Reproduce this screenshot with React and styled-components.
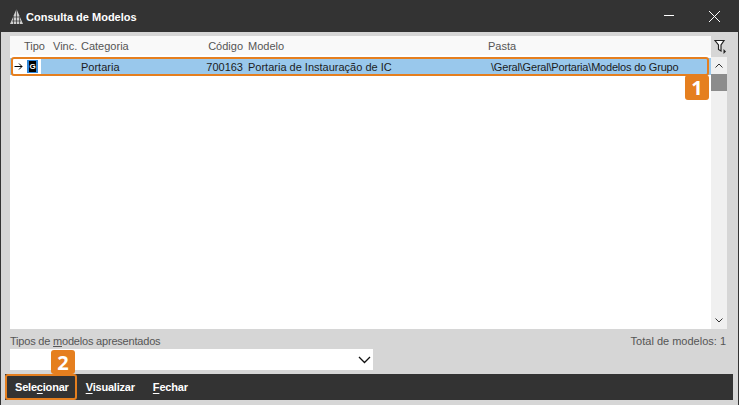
import React from 'react';
import styled, { createGlobalStyle } from 'styled-components';

const GlobalStyle = createGlobalStyle`
  html, body {
    margin: 0;
    padding: 0;
    background: #d6d6d6;
  }
`;

const Window = styled.div`
  width: 739px;
  height: 405px;
  box-sizing: border-box;
  display: flex;
  flex-direction: column;
  background: #d6d6d6;
  border-left: 1px solid #333;
  border-right: 1px solid #333;
  font-family: 'Liberation Sans', 'Noto Sans', sans-serif;
  font-size: 11px;
  color: #222;
  overflow: hidden;
`;

const TitleBar = styled.div`
  height: 32px;
  margin: 0 -1px;
  flex: none;
  display: flex;
  align-items: center;
  background: #333;
  color: #fff;
  padding-left: 9px;
`;

const Title = styled.span`
  margin-left: 2px;
  padding-top: 1px;
  font-weight: 700;
  font-size: 11px;
`;

const WindowButtons = styled.div`
  margin-left: auto;
  display: flex;
  align-items: center;
  gap: 33px;
  padding-right: 18px;
`;

const GridArea = styled.div`
  height: 293px;
  flex: none;
  margin: 4px 11px 0 9px;
  display: flex;
`;

const Grid = styled.div`
  position: relative;
  width: 701px;
  flex: none;
  background: #fff;
`;

const Side = styled.div`
  flex: 1;
  display: flex;
  flex-direction: column;
  align-items: stretch;
`;

const FilterSlot = styled.div`
  height: 21px;
  display: flex;
  align-items: center;
  justify-content: center;
  padding-left: 2px;
`;

const ScrollBar = styled.div`
  width: 16px;
  flex: 1;
  background: #f0f0f0;
  display: flex;
  flex-direction: column;
`;

const ScrollButton = styled.div`
  height: 17px;
  display: flex;
  align-items: center;
  justify-content: center;
  flex: none;
`;

const ScrollThumb = styled.div`
  height: 17px;
  flex: none;
  background: #8c8c8c;
`;

const ScrollTrack = styled.div`
  flex: 1;
`;

const Cols = styled.div`
  display: grid;
  grid-template-columns: 3px 11px 29px 28px 123px 39px 241px 1fr;
  height: ${p => p.$height}px;
  align-items: center;
  background: ${p => p.$bg};
`;

const Cell = styled.div`
  white-space: nowrap;
  text-align: ${p => (p.$right ? 'right' : 'left')};
  color: ${p => (p.$muted ? '#555' : '#1c1c1c')};
  padding-left: ${p => p.$pad || 0}px;
  letter-spacing: ${p => (p.$tight ? '-0.2px' : 'normal')};
`;

const Spacer = styled.div`
  height: 3px;
`;

const TipoBox = styled.div`
  width: 17px;
  height: 17px;
  background: #fff;
  display: flex;
  align-items: center;
  justify-content: center;
`;

const TipoIcon = styled.div`
  width: 11px;
  height: 13px;
  box-sizing: border-box;
  background: #000;
  border: 1px solid #2f86d8;
  border-width: 1px 2px;
  color: #fff;
  font-size: 8px;
  font-weight: 700;
  line-height: 11px;
  text-align: center;
`;

const ArrowBox = styled.div`
  height: 17px;
  background: #fff;
  display: flex;
  align-items: center;
  justify-content: center;
`;

const RowOutline = styled.div`
  position: absolute;
  left: 1px;
  top: 21px;
  width: 698px;
  height: 19px;
  box-sizing: border-box;
  border: 2px solid #e57f1f;
  border-radius: 3px;
`;

const Badge = styled.div`
  position: absolute;
  width: 24px;
  height: 24px;
  display: flex;
  align-items: center;
  justify-content: center;
  background: #e57f1f;
  border-radius: 3px;
  color: #fff;
  font-family: 'Open Sans', 'Liberation Sans', sans-serif;
  font-size: 20px;
  font-weight: 700;
  z-index: 2;
`;

const Badge1 = styled(Badge)`
  left: 675px;
  top: 39px;
  height: 25px;
`;

const Footer = styled.div`
  height: 38px;
  flex: none;
  margin: 3px 5px 0 9px;
`;

const FooterTop = styled.div`
  height: 17px;
  display: flex;
  justify-content: space-between;
  align-items: center;
  padding-right: 7px;
  color: #555;
`;

const TiposLabel = styled.span`
  letter-spacing: -0.2px;
`;

const SelectBox = styled.div`
  width: 363px;
  height: 21px;
  background: #fff;
  display: flex;
  align-items: center;
  justify-content: flex-end;
  padding-right: 2px;
  box-sizing: border-box;
`;

const ActionBar = styled.div`
  position: relative;
  height: 26px;
  flex: none;
  margin: 4px 5px 0 4px;
  background: #333;
  display: flex;
  align-items: center;
`;

const ActionButton = styled.button`
  height: 26px;
  box-sizing: border-box;
  background: transparent;
  border: ${p => (p.$active ? '2px solid #e57f1f' : '0')};
  border-radius: 3px;
  color: #fff;
  font-family: inherit;
  font-size: 11px;
  font-weight: 700;
  letter-spacing: -0.2px;
  padding: ${p => (p.$active ? '0 6px 0 8px' : '0 9px')};

  u {
    text-underline-offset: 2px;
  }
`;

const Badge2 = styled(Badge)`
  left: 46px;
  top: -24px;
`;

const App = () => (
  <Window>
    <GlobalStyle />
    <TitleBar>
      <svg width="15" height="17" viewBox="0 0 15 17">
        <path d="M7.5 1 L14 16 H1 Z" fill="#cfcfcf" />
        <path d="M7.5 1 V16 M4.5 8 V16 M10.5 8 V16 M3 13 H12 M5 9 H10" stroke="#333" strokeWidth="0.7" />
      </svg>
      <Title>Consulta de Modelos</Title>
      <WindowButtons>
        <svg width="12" height="12" viewBox="0 0 12 12">
          <path d="M1 5.5 H11" stroke="#fff" strokeWidth="1" />
        </svg>
        <svg width="13" height="13" viewBox="0 0 13 13">
          <path d="M1 1 L12 12 M12 1 L1 12" stroke="#fff" strokeWidth="1" />
        </svg>
      </WindowButtons>
    </TitleBar>
    <GridArea>
      <Grid>
        <Cols $height={19} $bg="#f9f9f9">
          <Cell />
          <Cell />
          <Cell $muted>Tipo</Cell>
          <Cell $muted>Vinc.</Cell>
          <Cell $muted>Categoria</Cell>
          <Cell $muted $right>Código</Cell>
          <Cell $muted $pad={5}>Modelo</Cell>
          <Cell $muted $pad={4}>Pasta</Cell>
        </Cols>
        <Spacer />
        <Cols $height={17} $bg="#99c8ec">
          <Cell />
          <ArrowBox>
            <svg width="9" height="9" viewBox="0 0 9 9">
              <path d="M0.5 4.5 H8 M5 1.5 L8 4.5 L5 7.5" fill="none" stroke="#000" strokeWidth="1" />
            </svg>
          </ArrowBox>
          <Cell>
            <TipoBox>
              <TipoIcon>G</TipoIcon>
            </TipoBox>
          </Cell>
          <Cell />
          <Cell>Portaria</Cell>
          <Cell $right>700163</Cell>
          <Cell $pad={5}>Portaria de Instauração de IC</Cell>
          <Cell $pad={7} $tight>\Geral\Geral\Portaria\Modelos do Grupo</Cell>
        </Cols>
        <RowOutline />
        <Badge1>1</Badge1>
      </Grid>
      <Side>
        <FilterSlot>
          <svg width="13" height="15" viewBox="0 0 13 15">
            <path d="M1 1.5 H10 L7 6 V12 L4.5 10.5 V6 Z" fill="#fff" stroke="#222" strokeWidth="1.2" />
            <path d="M9.5 10 L12 12.5 L9.5 15 Z" fill="#222" />
          </svg>
        </FilterSlot>
        <ScrollBar>
          <ScrollButton>
            <svg width="8" height="5" viewBox="0 0 8 5">
              <path d="M0.5 4.5 L4 1 L7.5 4.5" fill="none" stroke="#333" strokeWidth="1" />
            </svg>
          </ScrollButton>
          <ScrollThumb />
          <ScrollTrack />
          <ScrollButton>
            <svg width="8" height="5" viewBox="0 0 8 5">
              <path d="M0.5 0.5 L4 4 L7.5 0.5" fill="none" stroke="#333" strokeWidth="1" />
            </svg>
          </ScrollButton>
        </ScrollBar>
      </Side>
    </GridArea>
    <Footer>
      <FooterTop>
        <TiposLabel>Tipos de <u>m</u>odelos apresentados</TiposLabel>
        <span>Total de modelos: 1</span>
      </FooterTop>
      <SelectBox>
        <svg width="13" height="8" viewBox="0 0 13 8">
          <path d="M1 1 L6.5 6.5 L12 1" fill="none" stroke="#111" strokeWidth="1.3" />
        </svg>
      </SelectBox>
    </Footer>
    <ActionBar>
      <ActionButton $active>Sele<u>c</u>ionar</ActionButton>
      <ActionButton><u>V</u>isualizar</ActionButton>
      <ActionButton><u>F</u>echar</ActionButton>
      <Badge2>2</Badge2>
    </ActionBar>
  </Window>
);

export default App;
